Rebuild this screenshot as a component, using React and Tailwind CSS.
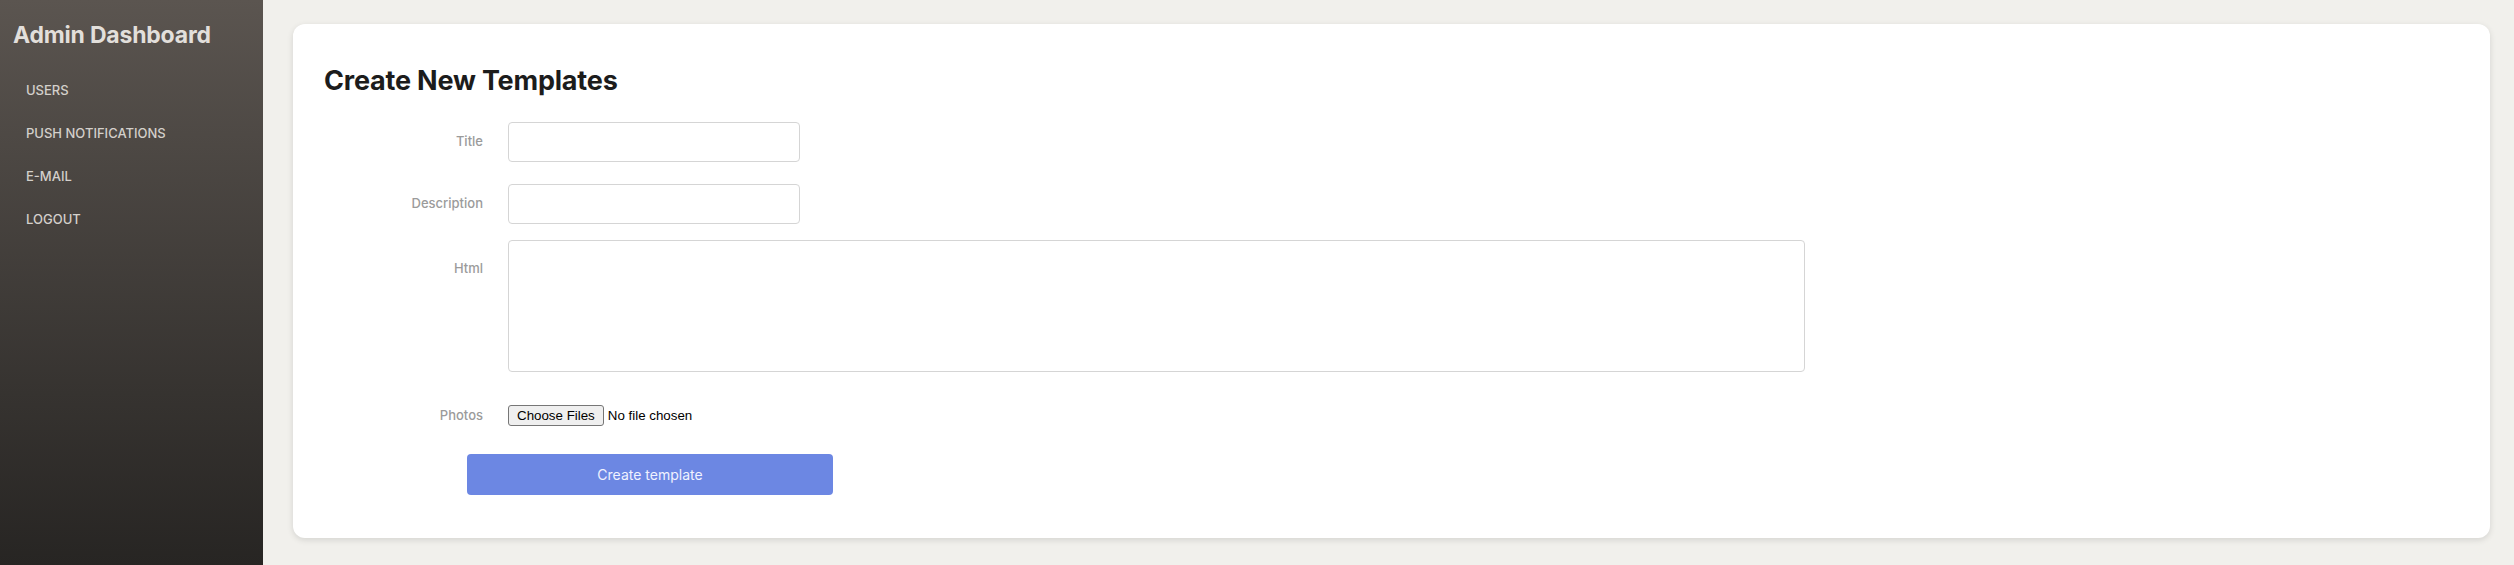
import { useState } from "react"

const navItems = ["Users", "Push Notifications", "E-mail", "Logout"]

function Sidebar() {
  return (
    <aside className="w-[263px] shrink-0 min-h-screen bg-gradient-to-b from-[#5b5550] to-[#272523] pl-[13px] pt-[19px]">
      <h1 className="text-[23px] leading-8 font-bold text-[#e2dfdb] tracking-[-0.2px]">
        Admin Dashboard
      </h1>
      <nav className="mt-[18px]">
        {navItems.map((item) => (
          <a
            key={item}
            href="#"
            className="flex items-center h-[43px] pl-[13px] text-[13px] font-medium uppercase text-[#d4d0cb]"
          >
            {item}
          </a>
        ))}
      </nav>
    </aside>
  )
}

function Label({ children, className = "" }) {
  return (
    <label className={`w-[159px] shrink-0 text-right text-[13px] font-medium text-[#9b9b9b] ${className}`}>
      {children}
    </label>
  )
}

function App() {
  const [title, setTitle] = useState("")
  const [description, setDescription] = useState("")
  const [html, setHtml] = useState("")

  return (
    <div className="flex min-h-screen w-full bg-[#f1f0ec] font-['Inter','Noto_Sans',sans-serif]">
      <Sidebar />

      <main className="flex-1 pl-[30px] pr-6 pt-6 pb-[25px]">
        <div className="bg-white rounded-xl shadow-[0_2px_6px_rgba(0,0,0,0.12)] pl-[31px] pt-[41px] pb-[43px]">
          <h2 className="text-[27px] leading-8 font-bold text-[#1c1c1c] tracking-[-0.2px]">
            Create New Templates
          </h2>

          <form className="mt-[25px]" onSubmit={(e) => e.preventDefault()}>
            {/* Title */}
            <div className="flex items-center gap-[25px]">
              <Label>Title</Label>
              <input
                type="text"
                value={title}
                onChange={(e) => setTitle(e.target.value)}
                className="w-[292px] h-10 border border-[#d5d5d5] rounded-[4px] px-3 text-sm focus:outline-none"
              />
            </div>

            {/* Description */}
            <div className="flex items-center gap-[25px] mt-[22px]">
              <Label>Description</Label>
              <input
                type="text"
                value={description}
                onChange={(e) => setDescription(e.target.value)}
                className="w-[292px] h-10 border border-[#d5d5d5] rounded-[4px] px-3 text-sm focus:outline-none"
              />
            </div>

            {/* Html */}
            <div className="flex items-start gap-[25px] mt-4">
              <Label className="pt-[19px]">Html</Label>
              <textarea
                value={html}
                onChange={(e) => setHtml(e.target.value)}
                className="w-[1297px] h-[132px] border border-[#d5d5d5] rounded-[4px] px-3 py-2 text-sm resize-none focus:outline-none"
              />
            </div>

            {/* Photos */}
            <div className="flex items-center gap-[25px] mt-[33px]">
              <Label>Photos</Label>
              <input
                type="file"
                multiple
                className="h-[22px] text-[13.33px] text-black font-['Liberation_Sans',Arial,sans-serif] file:h-[21px] file:mr-[4px] file:px-[8px] file:border file:border-[#767676] file:rounded-[3px] file:bg-[#efefef] file:text-black"
              />
            </div>

            <div className="mt-[27px] pl-[143px]">
              <button
                type="submit"
                className="w-[366px] h-[41px] rounded-[4px] bg-[#6c87e3] text-[14px] text-[#f0f2ff]"
              >
                Create template
              </button>
            </div>
          </form>
        </div>
      </main>
    </div>
  )
}

export default App
